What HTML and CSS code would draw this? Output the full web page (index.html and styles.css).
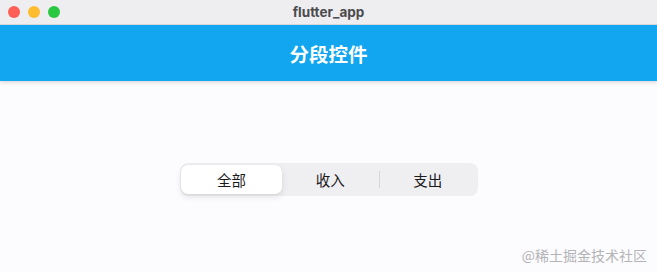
FILE: index.html
```html
<!DOCTYPE html>
<html lang="zh">
<head>
<meta charset="utf-8">
<title>flutter_app</title>
<link rel="stylesheet" href="styles.css">
</head>
<body>
<div class="window">
  <div class="titlebar">
    <div class="lights">
      <span class="light red"></span>
      <span class="light yellow"></span>
      <span class="light green"></span>
    </div>
    <div class="wintitle">flutter_app</div>
  </div>
  <div class="appbar">分段控件</div>
  <div class="content">
    <div class="segmented">
      <div class="seg active">全部</div>
      <div class="seg">收入</div>
      <div class="divider"></div>
      <div class="seg">支出</div>
    </div>
  </div>
  <div class="watermark">@稀土掘金技术社区</div>
</div>
</body>
</html>
```
FILE: styles.css
```css
html, body {
  margin: 0;
  padding: 0;
}
body {
  width: 657px;
  height: 272px;
  overflow: hidden;
  background: #fcfbfd;
  font-family: "Noto Sans CJK SC", "Noto Sans", sans-serif;
}
.window {
  position: relative;
  width: 657px;
  height: 272px;
  display: flex;
  flex-direction: column;
}
.titlebar {
  height: 25px;
  background: #eeedf0;
  border-bottom: 1px solid #d8d8db;
  box-sizing: border-box;
  position: relative;
  display: flex;
  align-items: center;
  justify-content: center;
}
.lights {
  position: absolute;
  left: 8px;
  top: 6px;
  display: flex;
  gap: 8px;
}
.light {
  width: 12px;
  height: 12px;
  border-radius: 50%;
  display: block;
}
.red { background: #fe5f57; }
.yellow { background: #febc2e; }
.green { background: #28c840; }
.wintitle {
  font-family: "Inter", "Liberation Sans", sans-serif;
  font-weight: 700;
  font-size: 13.5px;
  color: #4b4b4d;
  line-height: 25px;
  margin-top: 1px;
}
.appbar {
  height: 56px;
  background: #12a6f0;
  color: #ffffff;
  font-size: 19.5px;
  font-weight: 700;
  display: flex;
  align-items: center;
  justify-content: center;
  box-shadow: 0 2px 3px rgba(0, 0, 0, 0.12);
  position: relative;
  z-index: 1;
}
.content {
  flex: 1;
  display: flex;
  justify-content: center;
  padding-top: 82px;
  box-sizing: border-box;
}
.segmented {
  width: 298px;
  height: 33px;
  box-sizing: border-box;
  background: #efeef1;
  border-radius: 8px;
  display: flex;
  align-items: center;
  padding: 2px;
  padding-left: 1px;
  margin-left: 1px;
}
.seg {
  flex: 1;
  height: 29px;
  display: flex;
  align-items: center;
  justify-content: center;
  font-size: 14.5px;
  color: #1a1a1a;
}
.seg.active {
  flex: 0 0 101px;
  background: #ffffff;
  border-radius: 7px;
  box-shadow: 0 3px 6px rgba(0, 0, 0, 0.10), 0 0 1px rgba(0, 0, 0, 0.08);
}
.divider {
  width: 1px;
  height: 17px;
  background: #d6d6da;
}
.watermark {
  position: absolute;
  right: 10px;
  bottom: 7px;
  font-size: 14px;
  color: #b4b4b8;
  letter-spacing: 0;
}
```
